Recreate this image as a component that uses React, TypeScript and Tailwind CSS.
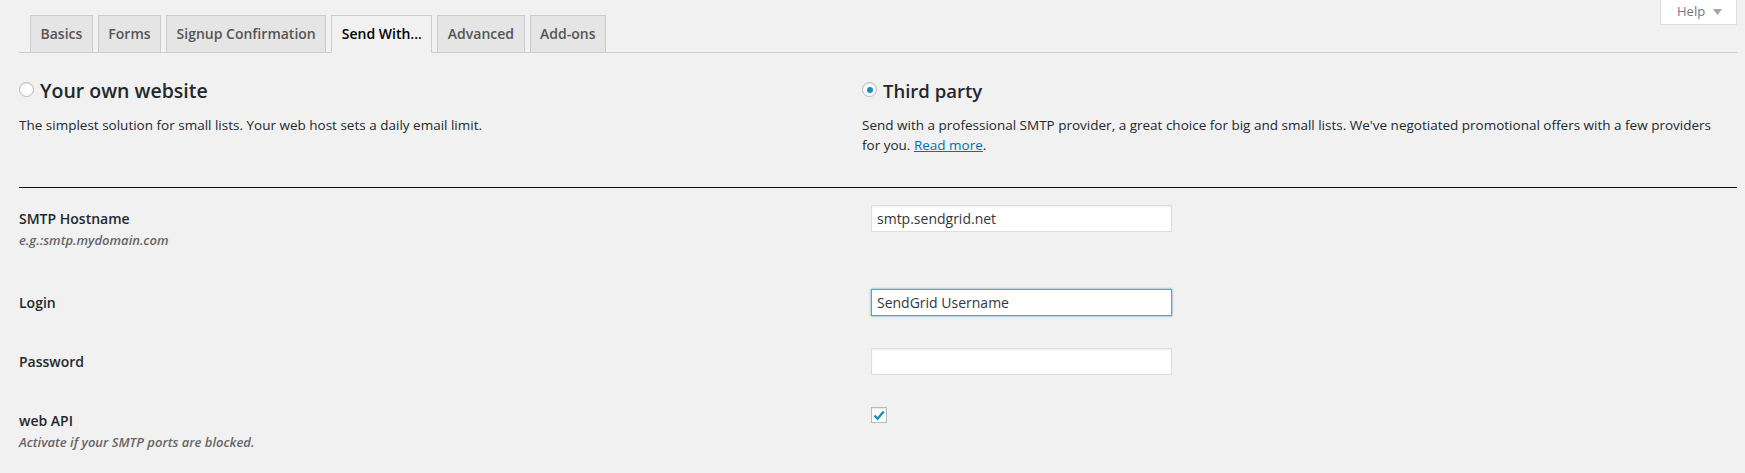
import React from "react";

const tabs = ["Basics", "Forms", "Signup Confirmation", "Send With...", "Advanced", "Add-ons"];

function Radio({ checked }: { checked?: boolean }) {
  return (
    <span className="mt-[3px] flex h-[15px] w-[15px] shrink-0 items-center justify-center rounded-full border border-[#b4b9be] bg-white shadow-[inset_0_1px_2px_rgba(0,0,0,0.1)]">
      {checked && <span className="h-[6px] w-[6px] rounded-full bg-[#1e8cbe]" />}
    </span>
  );
}

function TextField({ value, focused }: { value: string; focused?: boolean }) {
  return (
    <input
      defaultValue={value}
      className={
        focused
          ? "h-[27px] w-[301px] border border-[#5b9dd9] bg-white px-[5px] text-[14px] text-[#32373c] outline-none shadow-[0_0_2px_rgba(30,140,190,0.8)]"
          : "h-[27px] w-[301px] border border-[#ddd] bg-white px-[5px] text-[14px] text-[#32373c] outline-none shadow-[inset_0_1px_2px_rgba(0,0,0,0.07)]"
      }
    />
  );
}

export default function App() {
  return (
    <div className="min-h-[473px] bg-[#f1f1f1] pl-[19px] pr-[8px] font-['Open_Sans',sans-serif] text-[#23282d]">
      {/* tab bar + help */}
      <div className="flex h-[53px] items-start justify-between border-b border-[#ccc]">
        <div className="-mb-px flex gap-[5px] self-end pl-[11px]">
          {tabs.map((tab) => (
            <div
              key={tab}
              className={
                tab === "Send With..."
                  ? "h-[38px] border border-[#ccc] border-b-[#f1f1f1] bg-[#f1f1f1] px-[9.5px] text-[14px] font-semibold leading-[36px] text-black"
                  : "h-[38px] border border-[#ccc] bg-[#e5e5e5] px-[9.5px] text-[14px] font-semibold leading-[36px] text-[#555]"
              }
            >
              {tab}
            </div>
          ))}
        </div>
        <button className="flex h-[25px] w-[77px] items-center gap-[8px] border border-t-0 border-[#ddd] bg-white pl-[16px] text-[13px] text-[#72777c]">
          Help
          <svg width="9" height="6" viewBox="0 0 9 6">
            <path d="M0 0h9L4.5 6z" fill="#a0a5aa" />
          </svg>
        </button>
      </div>

      {/* sending method */}
      <div className="flex h-[134px] pt-[26px]">
        <div className="w-[843px]">
          <div className="flex items-start gap-[6px]">
            <Radio />
            <h3 className="text-[19.5px] font-semibold leading-[24px]">Your own website</h3>
          </div>
          <p className="mt-[12px] text-[13.5px] leading-[20px]">
            The simplest solution for small lists. Your web host sets a daily email limit.
          </p>
        </div>
        <div className="w-[858px]">
          <div className="flex items-start gap-[6px]">
            <Radio checked />
            <h3 className="text-[18.5px] font-semibold leading-[24px]">Third party</h3>
          </div>
          <p className="mt-[12px] text-[13.5px] leading-[20px]">
            Send with a professional SMTP provider, a great choice for big and small lists. We've negotiated
            promotional offers with a few providers for you. <a className="text-[#0073aa] underline">Read more</a>.
          </p>
        </div>
      </div>
      <div className="h-px bg-[#111]" />

      {/* smtp settings */}
      <div className="flex h-[101px] items-start pt-[17px]">
        <div className="w-[852px]">
          <div className="text-[14px] font-semibold leading-[27px]">SMTP Hostname</div>
          <div className="text-[13px] font-semibold italic leading-[17px] text-[#666]">e.g.:smtp.mydomain.com</div>
        </div>
        <TextField value="smtp.sendgrid.net" />
      </div>
      <div className="flex h-[59px] items-start">
        <div className="w-[852px] text-[14px] font-semibold leading-[27px]">Login</div>
        <TextField value="SendGrid Username" focused />
      </div>
      <div className="flex h-[59px] items-start">
        <div className="w-[852px] text-[14px] font-semibold leading-[27px]">Password</div>
        <TextField value="" />
      </div>
      <div className="flex items-start">
        <div className="w-[852px] pt-[4px]">
          <div className="text-[14px] font-semibold leading-[20px]">web API</div>
          <div className="mt-[2px] text-[13px] font-semibold italic leading-[18px] text-[#666]">
            Activate if your SMTP ports are blocked.
          </div>
        </div>
        <span className="flex h-[16px] w-[16px] items-center justify-center border border-[#b4b9be] bg-white shadow-[inset_0_1px_2px_rgba(0,0,0,0.1)]">
          <svg width="12" height="11" viewBox="0 0 12 11">
            <path d="M1.5 5.5l3 3.2L10.8 1.5" fill="none" stroke="#1e8cbe" strokeWidth="2.4" />
          </svg>
        </span>
      </div>
    </div>
  );
}
